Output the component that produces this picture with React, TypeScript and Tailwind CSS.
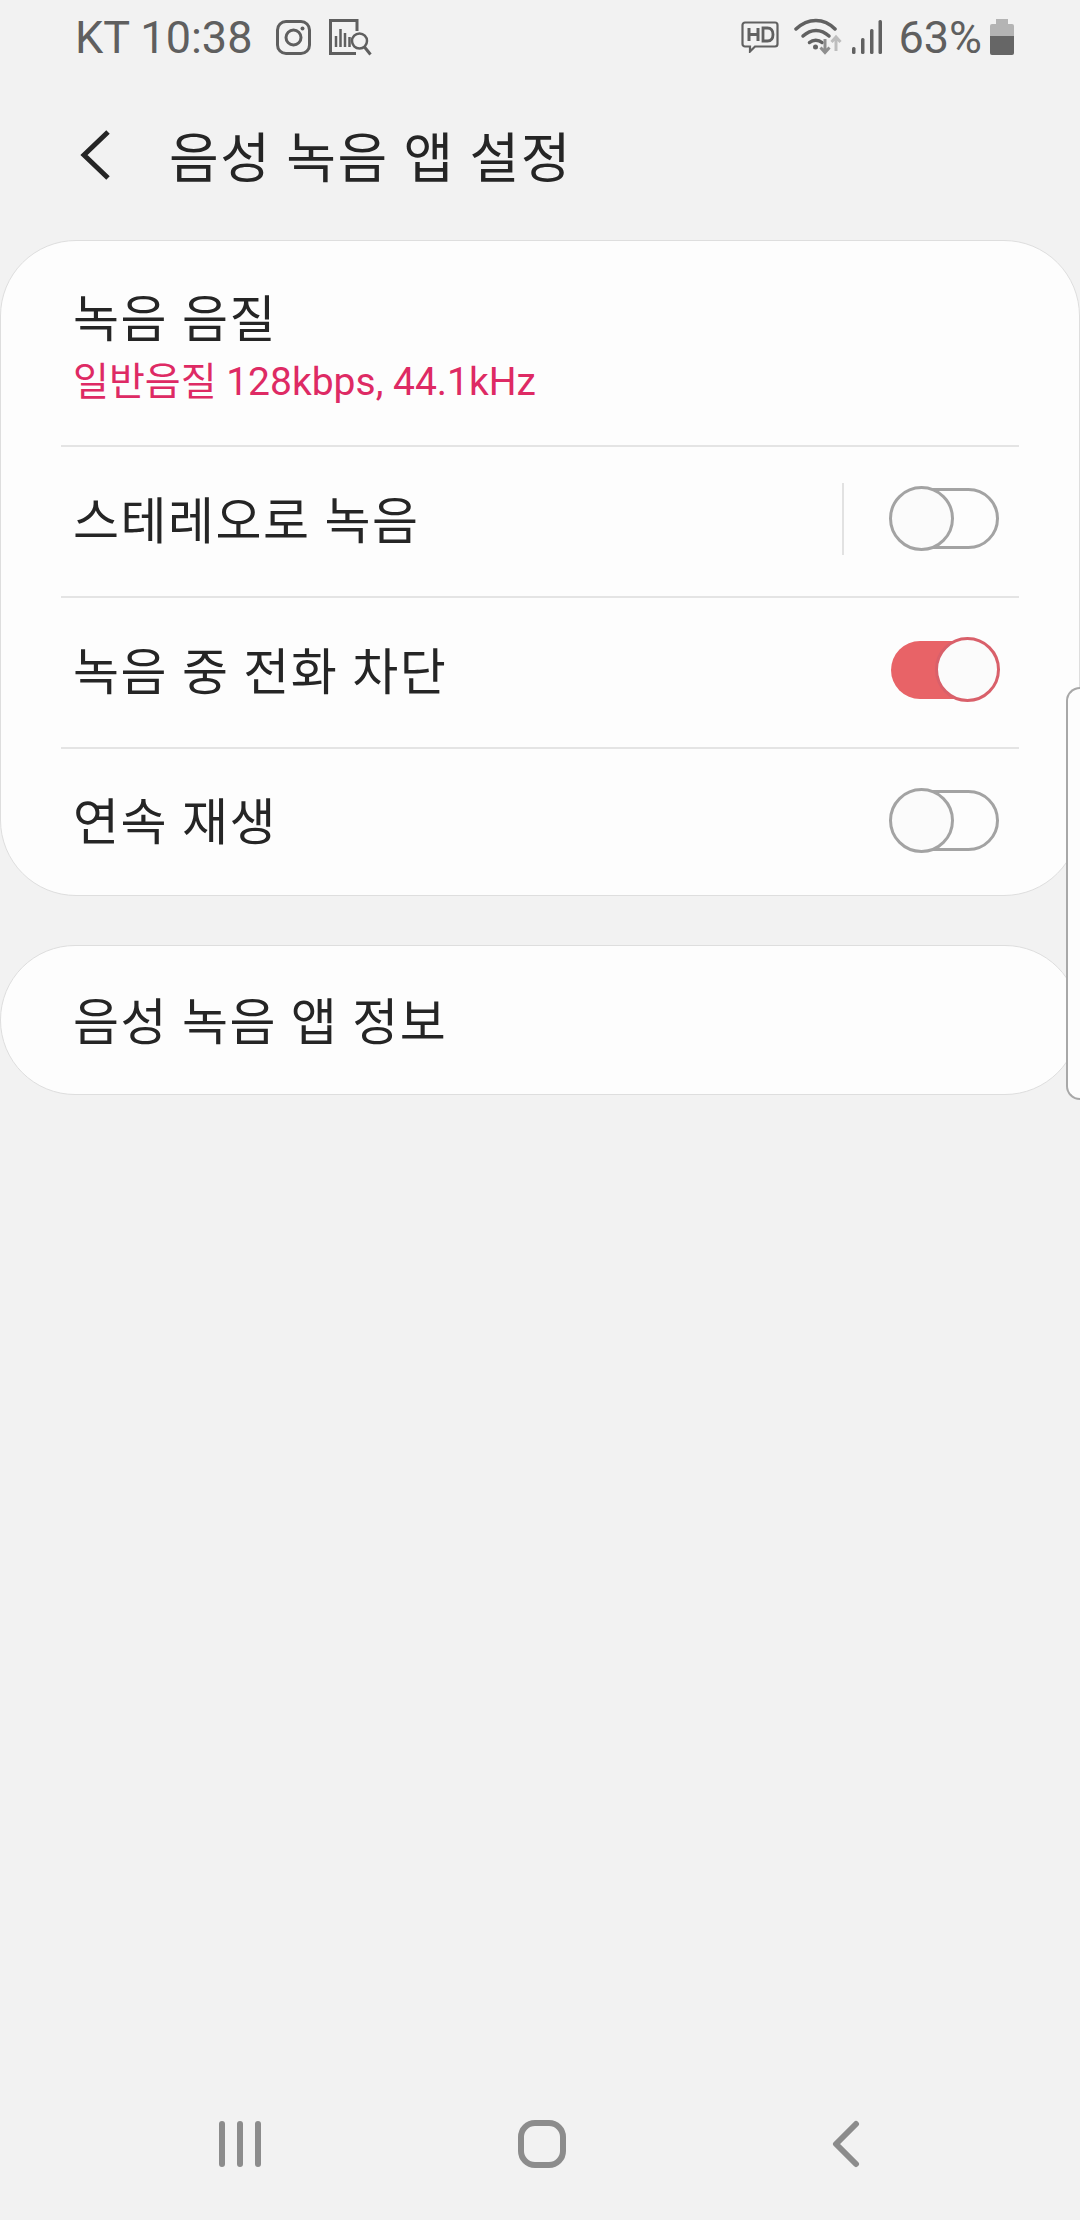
const FONT = "font-['Roboto','Noto_Sans_CJK_KR',sans-serif]";

function StatusIcons() {
  return (
    <div className="flex items-center">
      <svg width="38" height="32" viewBox="0 0 38 32" fill="none" className="mr-[15px]">
        <path d="M4 1.5h30a2.5 2.5 0 0 1 2.5 2.5v19a2.5 2.5 0 0 1-2.5 2.5H14l-5 5v-5H4A2.5 2.5 0 0 1 1.500 23V4A2.500 2.500 0 0 1 4 1.500z" stroke="#616161" strokeWidth="2.200" />
        <path d="M8 7v13M17 7v13M8 13.500h9" stroke="#616161" strokeWidth="3" />
        <path d="M22 7v13h4.500c3.500 0 5.500-2.500 5.500-6.500S30 7 26.500 7H22z" stroke="#616161" strokeWidth="2.800" />
      </svg>
      <svg width="48" height="38" viewBox="0 0 48 38" fill="none" className="mr-[10px]">
        <path d="M2 11C14-0.500 30-0.500 41 11" stroke="#616161" strokeWidth="3.500" strokeLinecap="round" />
        <path d="M9 18C17 10.500 27 10.500 35 18" stroke="#616161" strokeWidth="3.500" strokeLinecap="round" />
        <path d="M15.500 24.500C19 21.500 24.500 21.500 28 24.500" stroke="#616161" strokeWidth="3.500" strokeLinecap="round" />
        <circle cx="21.500" cy="29" r="2.500" fill="#616161" />
        <path d="M31 21v13M26.500 29.500l4.500 5 4.500-5" stroke="#8e8e8e" strokeWidth="3" />
        <path d="M42 33V19M37.500 24l4.500-5 4.500 5" stroke="#bdbdbd" strokeWidth="3" />
      </svg>
      <svg width="30" height="34" viewBox="0 0 30 34" fill="#616161" className="mr-[16px]">
        <rect x="0" y="27" width="3.500" height="7" rx="1.500" />
        <rect x="9" y="18" width="3.500" height="16" rx="1.500" />
        <rect x="18" y="9" width="3.500" height="25" rx="1.500" />
        <rect x="26.500" y="0" width="3.500" height="34" rx="1.500" />
      </svg>
      <span className="mr-[8px] text-[45px] leading-none text-[#5f5f5f]">63%</span>
      <svg width="24" height="36" viewBox="0 0 24 36" className="mr-[66px]">
        <rect x="6" y="0" width="12" height="5" fill="#b4b4b4" />
        <path d="M0 7a2 2 0 0 1 2-2h20a2 2 0 0 1 2 2v10H0z" fill="#b4b4b4" />
        <path d="M0 17h24v17a2 2 0 0 1-2 2H2a2 2 0 0 1-2-2z" fill="#666666" />
      </svg>
    </div>
  );
}

function StatusBar() {
  return (
    <div className="flex h-[72px] items-center justify-between pt-[2px]">
      <div className="flex items-center pl-[75px]">
        <span className="text-[45px] leading-none text-[#5f5f5f]">KT 10:38</span>
        <svg width="35" height="35" viewBox="0 0 35 35" fill="none" className="ml-[24px]">
          <rect x="1.500" y="1.500" width="32" height="32" rx="8.500" stroke="#5f5f5f" strokeWidth="3" />
          <circle cx="17.500" cy="17.500" r="7.500" stroke="#5f5f5f" strokeWidth="3" />
          <circle cx="26.500" cy="8.500" r="2" fill="#5f5f5f" />
        </svg>
        <svg width="43" height="37" viewBox="0 0 43 37" fill="none" className="ml-[18px]">
          <path d="M28 12V1.500H1.500v33H27" stroke="#5f5f5f" strokeWidth="3" />
          <path d="M7 28V17M11.500 28V10M16 28V14M20.500 28V18" stroke="#5f5f5f" strokeWidth="2.500" />
          <circle cx="30.500" cy="22" r="7.500" stroke="#5f5f5f" strokeWidth="2.500" />
          <path d="M35.500 28l6 7.500" stroke="#5f5f5f" strokeWidth="3" />
        </svg>
      </div>
      <StatusIcons />
    </div>
  );
}

function Toggle({ on = false }: { on?: boolean }) {
  if (on) {
    return (
      <div className="relative h-[65px] w-[110px] shrink-0">
        <div className="absolute left-[2px] right-0 top-[4px] h-[58px] rounded-full bg-[#e86367]" />
        <div className="absolute right-[-1px] top-0 h-[65px] w-[65px] rounded-full border-[3px] border-[#d9606a] bg-[#fbfbfb]" />
      </div>
    );
  }
  return (
    <div className="relative h-[65px] w-[110px] shrink-0">
      <div className="absolute left-[2px] right-0 top-[2px] h-[61px] rounded-full border-[3px] border-[#a3a3a3]" />
      <div className="absolute left-0 top-0 h-[65px] w-[65px] rounded-full border-[3px] border-[#a3a3a3] bg-[#fbfbfb]" />
    </div>
  );
}

function Divider() {
  return <div className="mx-[60px] h-[2px] bg-[#e4e4e4]" />;
}

function Label({ children, className = "" }: { children: string; className?: string }) {
  return <span className={`text-[50px] leading-none tracking-[1.5px] text-[#252525] ${className}`}>{children}</span>;
}

function NavBar() {
  return (
    <div className="mt-auto flex items-center pb-[52px] pl-[218px]">
      <svg width="44" height="48" viewBox="0 0 44 48" fill="none" stroke="#8c8c8c" strokeWidth="6" strokeLinecap="round">
        <path d="M4 4v40M22 4v40M40 4v40" />
      </svg>
      <svg width="48" height="48" viewBox="0 0 48 48" fill="none" stroke="#8c8c8c" strokeWidth="6" className="ml-[256px]">
        <rect x="3" y="3" width="42" height="42" rx="14" />
      </svg>
      <svg width="30" height="48" viewBox="0 0 30 48" fill="none" stroke="#8c8c8c" strokeWidth="6" strokeLinecap="round" strokeLinejoin="round" className="ml-[264px]">
        <path d="M26 4L6 24l20 20" />
      </svg>
    </div>
  );
}

export default function App() {
  return (
    <div className={`${FONT} relative flex h-[2220px] w-[1080px] flex-col overflow-hidden bg-[#f2f2f2]`}>
      <StatusBar />

      <div className="flex h-[168px] items-start pl-[80px] pt-[58px]">
        <svg width="30" height="50" viewBox="0 0 30 50" fill="none" stroke="#252525" strokeWidth="5">
          <path d="M28 2L4 25l24 23" />
        </svg>
        <h1 className="ml-[59px] mt-[3px] text-[54px] font-normal leading-none tracking-[1.5px] text-[#252525]">음성 녹음 앱 설정</h1>
      </div>

      <section className="rounded-[76px] border border-[#dedede] bg-[#fdfdfd]">
        <div className="flex h-[204px] flex-col pl-[72px] pt-[54px]">
          <Label>녹음 음질</Label>
          <span className="mt-[18px] text-[39px] leading-none text-[#de2a64]">일반음질 128kbps, 44.1kHz</span>
        </div>
        <Divider />
        <div className="flex h-[149px] items-center justify-between pb-[6px] pl-[72px] pr-[80px]">
          <Label className="mt-[6px]">스테레오로 녹음</Label>
          <div className="flex items-center gap-[45px]">
            <div className="h-[72px] w-[2px] bg-[#e2e2e2]" />
            <Toggle />
          </div>
        </div>
        <Divider />
        <div className="flex h-[149px] items-center justify-between pb-[6px] pl-[72px] pr-[80px]">
          <Label className="mt-[6px]">녹음 중 전화 차단</Label>
          <Toggle on />
        </div>
        <Divider />
        <div className="flex h-[146px] items-center justify-between pb-[4px] pl-[72px] pr-[80px]">
          <Label className="mt-[6px]">연속 재생</Label>
          <Toggle />
        </div>
      </section>

      <section className="mt-[49px] flex h-[150px] items-center rounded-[76px] border border-[#dedede] bg-[#fdfdfd] pl-[72px]">
        <Label className="mt-[6px]">음성 녹음 앱 정보</Label>
      </section>

      {/* edge panel handle sits over the cards */}
      <div className="absolute right-0 top-[687px] h-[413px] w-[14px] rounded-l-[14px] border-y-2 border-l-2 border-[#a8a8a8] bg-[#fdfdfd]" />

      <NavBar />
    </div>
  );
}
